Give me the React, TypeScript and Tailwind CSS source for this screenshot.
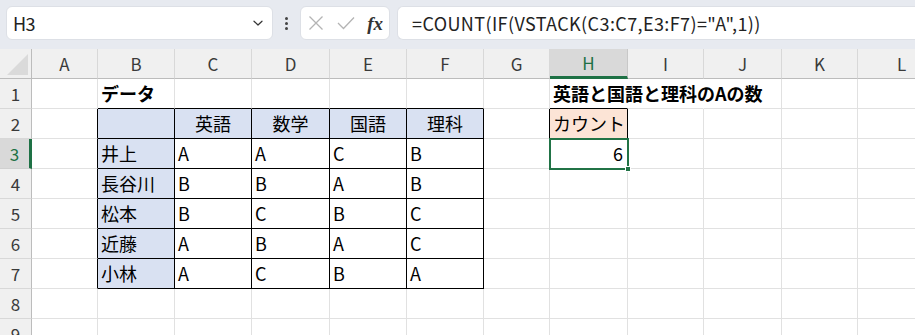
import React from "react";

const COLS = ["A", "B", "C", "D", "E", "F", "G", "H", "I", "J", "K", "L"];

type Cell = {
  text?: string;
  bold?: boolean;
  align?: "left" | "center" | "right";
  fill?: "blue" | "orange";
};

const data: Record<string, Cell> = {
  B1: { text: "データ", bold: true },
  H1: { text: "英語と国語と理科のAの数", bold: true },
  B2: { fill: "blue" },
  C2: { text: "英語", align: "center", fill: "blue" },
  D2: { text: "数学", align: "center", fill: "blue" },
  E2: { text: "国語", align: "center", fill: "blue" },
  F2: { text: "理科", align: "center", fill: "blue" },
  H2: { text: "カウント", fill: "orange" },
  H3: { text: "6", align: "right" },
};

const body: string[][] = [
  ["井上", "A", "A", "C", "B"],
  ["長谷川", "B", "B", "A", "B"],
  ["松本", "B", "C", "B", "C"],
  ["近藤", "A", "B", "A", "C"],
  ["小林", "A", "C", "B", "A"],
];
body.forEach((r, i) => {
  r.forEach((t, j) => {
    const key = COLS[1 + j] + (3 + i);
    data[key] = { text: t, fill: j === 0 ? "blue" : undefined };
  });
});

function inTable(c: number, r: number) {
  if (c >= 1 && c <= 5 && r >= 2 && r <= 7) return true;
  if (c === 7 && r === 2) return true;
  return false;
}

function ChevronDown() {
  return (
    <svg width="12" height="12" viewBox="0 0 12 12" fill="none">
      <path d="M2 4.2 L6 8 L10 4.2" stroke="#333" strokeWidth="1.2" strokeLinecap="round" strokeLinejoin="round" />
    </svg>
  );
}

export default function App() {
  const rows = [1, 2, 3, 4, 5, 6, 7, 8, 9];
  return (
    <div
      className="w-[915px] h-[335px] overflow-hidden bg-white text-black"
      style={{ fontFamily: '"Noto Sans CJK JP", "Noto Sans", sans-serif' }}
    >
      {/* top bar */}
      <div className="h-[49px] bg-[#e7eaf0] flex items-start pt-[6px]">
        <div className="ml-[6px] w-[267px] h-[34px] bg-white rounded-[6px] border border-[#dde0e6] flex items-center justify-between pl-[6px] pr-[8px]">
          <span className="text-[18px] text-[#222] tracking-[-0.5px]">H3</span>
          <ChevronDown />
        </div>
        <div className="w-[27px] h-[34px] flex flex-col items-center justify-center gap-[2px]">
          <span className="w-[3px] h-[3px] bg-[#444] rounded-full" />
          <span className="w-[3px] h-[3px] bg-[#444] rounded-full" />
          <span className="w-[3px] h-[3px] bg-[#444] rounded-full" />
        </div>
        <div className="w-[90px] h-[34px] bg-white rounded-[6px] border border-[#dde0e6] flex items-center pl-[7px] pr-[6px] justify-between">
          <svg width="16" height="16" viewBox="0 0 16 16">
            <path d="M1.5 1.5 L14.5 14.5 M14.5 1.5 L1.5 14.5" stroke="#b4b4b4" strokeWidth="1.3" />
          </svg>
          <svg width="18" height="14" viewBox="0 0 18 14">
            <path d="M1 7 L6.5 12.5 L17 1.5" stroke="#b4b4b4" strokeWidth="1.3" fill="none" />
          </svg>
          <span
            className="text-[19px] italic font-bold text-[#333] leading-none"
            style={{ fontFamily: '"Liberation Serif", "DejaVu Serif", serif' }}
          >
            fx
          </span>
        </div>
        <div className="ml-[7px] flex-1 h-[34px] bg-white rounded-l-[6px] border border-r-0 border-[#dde0e6] flex items-center pl-[14px]">
          <span className="text-[18px] text-[#222] tracking-[0.4px]">=COUNT(IF(VSTACK(C3:C7,E3:F7)="A",1))</span>
        </div>
      </div>

      {/* grid */}
      <div className="relative grid grid-cols-[32px_66px_77px_77px_78px_77px_77px_66px_78px_76px_78px_76px_88px] auto-rows-[30px] text-[18px]">
        {/* header row */}
        <div className="bg-[#f0f0f0] border-r border-r-[#bcbcbc] border-b border-b-[#bcbcbc] relative">
          <svg className="absolute left-[7px] top-[5px]" width="21" height="21" viewBox="0 0 21 21">
            <path d="M21 0 L21 21 L0 21 Z" fill="#dadada" />
          </svg>
        </div>
        {COLS.map((c) => {
          const sel = c === "H";
          return (
            <div
              key={c}
              className={
                sel
                  ? "bg-[#d9d9d9] border-b-[3px] border-b-[#1e7145] border-r border-r-[#c8c8c8] flex items-center justify-center text-[#1e7145] text-[17px]"
                  : "bg-[#f0f0f0] border-b border-b-[#bcbcbc] border-r border-r-[#d8d8d8] flex items-center justify-center text-[#3a3a3a] text-[17px]"
              }
            >
              {c}
            </div>
          );
        })}

        {rows.map((r) => (
          <React.Fragment key={r}>
            <div
              className={
                r === 3
                  ? "bg-[#d9d9d9] border-r-[3px] border-r-[#1e7145] border-b border-b-[#d0d0d0] flex items-center justify-center text-[#1e7145] text-[17px]"
                  : "bg-[#f0f0f0] border-r border-r-[#bcbcbc] border-b border-b-[#d8d8d8] flex items-center justify-center text-[#3a3a3a] text-[17px]"
              }
            >
              {r}
            </div>
            {COLS.map((c, ci) => {
              const key = c + r;
              const cell = data[key];
              const t = inTable(ci, r);
              const blackB = t || inTable(ci, r + 1);
              const blackR = t || inTable(ci + 1, r);
              const hideR = !blackR && r === 1 && (c === "H" || c === "I");
              const bCls = blackB ? "border-b border-b-black" : "border-b border-b-[#e1e1e1]";
              const rCls = hideR
                ? "border-r border-r-transparent"
                : blackR
                ? "border-r border-r-black"
                : "border-r border-r-[#e1e1e1]";
              const fill =
                cell?.fill === "blue"
                  ? "bg-[#d9e1f2]"
                  : cell?.fill === "orange"
                  ? "bg-[#fce4d6]"
                  : "";
              const align =
                cell?.align === "center"
                  ? "justify-center"
                  : cell?.align === "right"
                  ? "justify-end pr-[4px]"
                  : "justify-start pl-[3px]";
              return (
                <div
                  key={key}
                  className={`${bCls} ${rCls} ${fill} ${align} flex items-center whitespace-nowrap overflow-visible relative`}
                >
                  {cell?.text && (
                    <span className={cell.bold ? "font-bold relative z-10" : "relative z-10"}>{cell.text}</span>
                  )}
                </div>
              );
            })}
          </React.Fragment>
        ))}

        {/* selection H3 */}
        <div className="absolute left-[549px] top-[89px] w-[80px] h-[32px] border-2 border-[#217346] pointer-events-none z-20" />
        <div className="absolute left-[625px] top-[117px] w-[6px] h-[6px] bg-[#217346] border border-white z-30" />
      </div>
    </div>
  );
}
